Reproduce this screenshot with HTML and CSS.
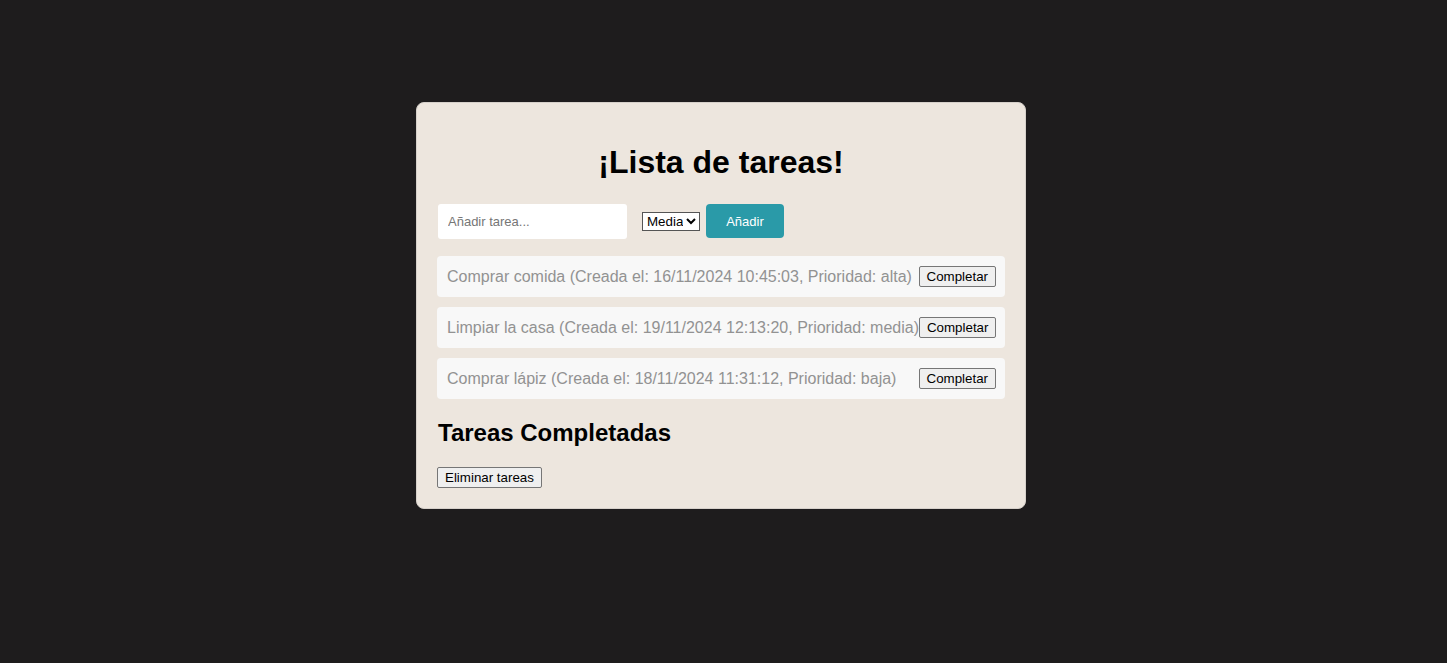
FILE: index.html
```html
<!DOCTYPE html>
<html lang="es">
<head>
<meta charset="utf-8">
<title>Lista de tareas</title>
<link rel="stylesheet" href="styles.css">
</head>
<body>
<div class="card">
  <h1 class="title">¡Lista de tareas!</h1>
  <div class="form">
    <input class="task-input" type="text" placeholder="Añadir tarea...">
    <select class="priority">
      <option>Alta</option>
      <option selected>Media</option>
      <option>Baja</option>
    </select>
    <button class="add-btn">Añadir</button>
  </div>
  <ul class="tasks">
    <li class="task"><span class="task-text">Comprar comida (Creada el: 16/11/2024 10:45:03, Prioridad: alta)</span><button class="btn">Completar</button></li>
    <li class="task"><span class="task-text">Limpiar la casa (Creada el: 19/11/2024 12:13:20, Prioridad: media)</span><button class="btn">Completar</button></li>
    <li class="task"><span class="task-text">Comprar lápiz (Creada el: 18/11/2024 11:31:12, Prioridad: baja)</span><button class="btn">Completar</button></li>
  </ul>
  <h2 class="subtitle">Tareas Completadas</h2>
  <button class="btn">Eliminar tareas</button>
</div>
</body>
</html>
```

FILE: styles.css
```css
html, body {
  margin: 0;
  background: #1e1c1d;
  font-family: "Liberation Sans", Arial, sans-serif;
}
body {
  padding: 102px 5px 0 0;
  min-height: 663px;
  box-sizing: border-box;
}
.card {
  width: 610px;
  box-sizing: border-box;
  margin: 0 auto;
  background: #ede6de;
  border: 1px solid #d6d0ca;
  border-radius: 8px;
  padding: 20px;
}
.title {
  font-size: 32px;
  font-weight: bold;
  text-align: center;
  color: #000;
  margin: 21px 0 23px;
  line-height: 37px;
}
.form {
  display: flex;
  align-items: center;
  margin-bottom: 17px;
}
.task-input {
  width: 189px;
  height: 35px;
  box-sizing: border-box;
  border: none;
  border-radius: 3px;
  background: #fff;
  padding: 0 10px;
  font-family: "Liberation Sans", Arial, sans-serif;
  font-size: 13px;
  color: #333;
  margin-right: 15px;
  margin-left: 1px;
}
.task-input::placeholder {
  color: #767676;
}
.priority {
  font-family: "Liberation Sans", Arial, sans-serif;
  font-size: 13.33px;
  height: 19px;
  width: 58px;
  border: 1px solid #555;
  border-radius: 0;
  background: #fff;
  color: #000;
  padding: 0;
  margin-right: 6px;
}
.add-btn {
  align-self: flex-start;
  width: 78px;
  height: 34px;
  border: none;
  border-radius: 4px;
  background: #2a9aa8;
  color: #fff;
  font-family: "Liberation Sans", Arial, sans-serif;
  font-size: 13px;
  cursor: pointer;
}
.tasks {
  list-style: none;
  margin: 0;
  padding: 0;
  display: flex;
  flex-direction: column;
  gap: 10px;
}
.task {
  display: flex;
  align-items: center;
  justify-content: space-between;
  background: #f8f8f8;
  border-radius: 4px;
  height: 41px;
  box-sizing: border-box;
  padding: 0 9px 0 10px;
}
.task-text {
  font-size: 16px;
  color: #929292;
  white-space: nowrap;
}
.btn {
  font-family: "Liberation Sans", Arial, sans-serif;
  font-size: 13.33px;
  color: #000;
  background: #efefef;
  border: 1px solid #767676;
  border-radius: 2px;
  padding: 1px 7px;
  height: 21px;
  line-height: 17px;
  cursor: pointer;
}
.subtitle {
  font-size: 24px;
  font-weight: bold;
  color: #000;
  margin: 20px 0 20px;
  line-height: 28px;
  padding-left: 1px;
}
```
